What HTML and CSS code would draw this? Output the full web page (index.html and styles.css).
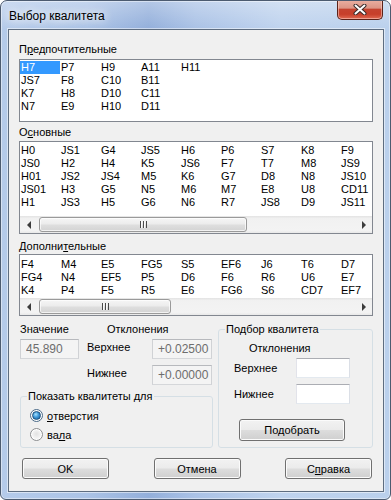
FILE: index.html
```html
<!DOCTYPE html>
<html lang="ru">
<head>
    <meta charset="UTF-8">
    <title>Выбор квалитета</title>
    <link rel="stylesheet" href="styles.css">
</head>
<body>
    <div class="window">
        <div class="titlebar">
            <span class="title">Выбор квалитета</span>
            <button class="close-btn" title="Закрыть">
                <svg width="14" height="11" viewBox="0 0 14 11">
                    <path d="M2.5 1.5 L11.5 9.5 M11.5 1.5 L2.5 9.5" stroke="#3a2a28" stroke-width="4" stroke-linecap="round" fill="none"/>
                    <path d="M2.5 1.5 L11.5 9.5 M11.5 1.5 L2.5 9.5" stroke="#ffffff" stroke-width="2" stroke-linecap="round" fill="none"/>
                </svg>
            </button>
        </div>

        <div class="client">
            <!-- Предпочтительные -->
            <div class="section-label label-pref">П<u>р</u>едпочтительные</div>
            <div class="listbox listbox-pref">
                <div class="items rows-4">
                    <span class="item selected">H7</span><span class="item">JS7</span><span class="item">K7</span><span class="item">N7</span>
                    <span class="item">P7</span><span class="item">F8</span><span class="item">H8</span><span class="item">E9</span>
                    <span class="item">H9</span><span class="item">C10</span><span class="item">D10</span><span class="item">H10</span>
                    <span class="item">A11</span><span class="item">B11</span><span class="item">C11</span><span class="item">D11</span>
                    <span class="item">H11</span>
                </div>
            </div>

            <!-- Основные -->
            <div class="section-label label-main">О<u>с</u>новные</div>
            <div class="listbox listbox-main">
                <div class="items rows-5">
                    <span class="item">H0</span><span class="item">JS0</span><span class="item">H01</span><span class="item">JS01</span><span class="item">H1</span>
                    <span class="item">JS1</span><span class="item">H2</span><span class="item">JS2</span><span class="item">H3</span><span class="item">JS3</span>
                    <span class="item">G4</span><span class="item">H4</span><span class="item">JS4</span><span class="item">G5</span><span class="item">H5</span>
                    <span class="item">JS5</span><span class="item">K5</span><span class="item">M5</span><span class="item">N5</span><span class="item">G6</span>
                    <span class="item">H6</span><span class="item">JS6</span><span class="item">K6</span><span class="item">M6</span><span class="item">N6</span>
                    <span class="item">P6</span><span class="item">F7</span><span class="item">G7</span><span class="item">M7</span><span class="item">R7</span>
                    <span class="item">S7</span><span class="item">T7</span><span class="item">D8</span><span class="item">E8</span><span class="item">JS8</span>
                    <span class="item">K8</span><span class="item">M8</span><span class="item">N8</span><span class="item">U8</span><span class="item">D9</span>
                    <span class="item">F9</span><span class="item">JS9</span><span class="item">JS10</span><span class="item">CD11</span><span class="item">JS11</span>
                </div>
                <div class="hscroll">
                    <span class="scroll-arrow arrow-left"></span>
                    <div class="scroll-track">
                        <div class="scroll-thumb thumb-main"><span class="grip"></span></div>
                    </div>
                    <span class="scroll-arrow arrow-right"></span>
                </div>
            </div>

            <!-- Дополнительные -->
            <div class="section-label label-extra">Дополни<u>т</u>ельные</div>
            <div class="listbox listbox-extra">
                <div class="items rows-3">
                    <span class="item">F4</span><span class="item">FG4</span><span class="item">K4</span>
                    <span class="item">M4</span><span class="item">N4</span><span class="item">P4</span>
                    <span class="item">E5</span><span class="item">EF5</span><span class="item">F5</span>
                    <span class="item">FG5</span><span class="item">P5</span><span class="item">R5</span>
                    <span class="item">S5</span><span class="item">D6</span><span class="item">E6</span>
                    <span class="item">EF6</span><span class="item">F6</span><span class="item">FG6</span>
                    <span class="item">J6</span><span class="item">R6</span><span class="item">S6</span>
                    <span class="item">T6</span><span class="item">U6</span><span class="item">CD7</span>
                    <span class="item">D7</span><span class="item">E7</span><span class="item">EF7</span>
                </div>
                <div class="hscroll">
                    <span class="scroll-arrow arrow-left"></span>
                    <div class="scroll-track">
                        <div class="scroll-thumb thumb-extra"><span class="grip"></span></div>
                    </div>
                    <span class="scroll-arrow arrow-right"></span>
                </div>
            </div>

            <div class="lower">
                <div class="lower-left">
                    <div class="head-row">
                        <span class="lbl-value">Значение</span>
                        <span>Отклонения</span>
                    </div>
                    <div class="field-row">
                        <input class="textbox tb-value" value="45.890" disabled>
                        <span class="field-label">Верхнее</span>
                        <input class="textbox tb-dev" value="+0.02500" disabled>
                    </div>
                    <div class="field-row">
                        <span class="field-label indent">Нижнее</span>
                        <input class="textbox tb-dev" value="+0.00000" disabled>
                    </div>
                    <fieldset class="group group-show">
                        <legend>Показать квалитеты для</legend>
                        <label class="radio"><span class="radio-mark checked"></span><u>о</u>тверстия</label>
                        <label class="radio"><span class="radio-mark"></span>ва<u>л</u>а</label>
                    </fieldset>
                </div>

                <fieldset class="group group-pick">
                    <legend>Подбор квалитета</legend>
                    <div class="pick-title">Отклонения</div>
                    <div class="pick-row first">
                        <span class="pick-label">Верхнее</span>
                        <input class="textbox tb-pick">
                    </div>
                    <div class="pick-row">
                        <span class="pick-label">Нижнее</span>
                        <input class="textbox tb-pick">
                    </div>
                    <button class="btn btn-pick">Подобрать</button>
                </fieldset>
            </div>

            <div class="dialog-buttons">
                <button class="btn btn-dialog">OK</button>
                <button class="btn btn-dialog">Отмена</button>
                <button class="btn btn-dialog">С<u>п</u>равка</button>
            </div>
        </div>
    </div>
</body>
</html>
```

FILE: styles.css
```css
* {
    box-sizing: border-box;
}

body {
    margin: 0;
    background: #ffffff;
    font-family: "Liberation Sans", Arial, sans-serif;
    font-size: 11px;
    color: #000;
}

u {
    text-decoration: underline;
    text-underline-offset: 1px;
}

/* Window frame */
.window {
    width: 391px;
    height: 500px;
    border: 1px solid #4c5b70;
    border-radius: 7px 7px 6px 6px;
    overflow: hidden;
    background:
        linear-gradient(180deg, rgba(255, 255, 255, 0.3), rgba(255, 255, 255, 0) 28px),
        linear-gradient(90deg, #b5cbea 0%, #abc3e6 22%, #93afdb 38%, #aac2e6 50%, #bfd3ee 72%, #bad0ec 100%);
    box-shadow: inset 0 0 0 1px rgba(255, 255, 255, 0.45);
}

.titlebar {
    height: 28px;
    display: flex;
    justify-content: space-between;
    align-items: flex-start;
}

.title {
    padding: 8px 0 0 8px;
    font-size: 12px;
    line-height: 15px;
    color: #000;
    text-shadow: 0 0 8px #fff, 0 0 12px #fff;
}

.close-btn {
    width: 46px;
    height: 20px;
    margin: -1px 7px 0 0;
    padding: 0;
    border: 1px solid #5b2219;
    border-top: none;
    border-radius: 0 0 5px 5px;
    background: linear-gradient(180deg, #eab0a2 0%, #dc9585 42%, #c5432f 50%, #c73f2a 75%, #e06a52 100%);
    box-shadow: inset 0 0 0 1px rgba(255, 210, 200, 0.55);
    display: flex;
    align-items: center;
    justify-content: center;
}

/* Client area */
.client {
    width: 376px;
    margin-left: 7px;
    border: 1px solid #5e6d80;
    box-shadow: 0 0 0 1px rgba(255, 255, 255, 0.5);
    background: #f0f0f0;
    padding: 0 10px 12px;
}

.section-label {
    line-height: 13px;
}
.label-pref {
    margin-top: 13px;
}
.label-main {
    margin-top: 4px;
}
.label-extra {
    margin-top: 6px;
}

/* List boxes */
.listbox {
    background: #fff;
    border: 1px solid #828790;
    overflow: hidden;
    display: flex;
    flex-direction: column;
}
.listbox-pref {
    height: 63px;
    margin-top: 3px;
    padding-top: 1px;
}
.listbox-main {
    height: 93px;
    margin-top: 2px;
    padding-top: 2px;
}
.listbox-extra {
    height: 62px;
    margin-top: 1px;
    padding-top: 3px;
}

.items {
    flex: 1;
    display: grid;
    grid-auto-flow: column;
    grid-auto-columns: 40px;
    align-content: start;
}
.rows-3 {
    grid-template-rows: repeat(3, 13px);
}
.rows-4 {
    grid-template-rows: repeat(4, 13px);
}
.rows-5 {
    grid-template-rows: repeat(5, 13px);
}

.item {
    padding-left: 1px;
    line-height: 13px;
    white-space: nowrap;
}
.item.selected {
    background: #3399ff;
    color: #fff;
}

/* Horizontal scrollbar */
.hscroll {
    height: 17px;
    display: flex;
    background: linear-gradient(180deg, #e3e3e3 0%, #f1f1f1 15%, #f3f3f3 85%, #e8e8e8 100%);
}
.scroll-arrow {
    width: 17px;
    display: flex;
    align-items: center;
    justify-content: center;
}
.scroll-arrow::before {
    content: "";
    border-top: 4px solid transparent;
    border-bottom: 4px solid transparent;
}
.arrow-left::before {
    border-right: 4px solid #3c3c3c;
}
.arrow-right::before {
    border-left: 4px solid #3c3c3c;
}
.scroll-track {
    flex: 1;
    padding: 1px 0 1px 2px;
}
.scroll-thumb {
    height: 100%;
    border: 1px solid #9a9a9a;
    border-radius: 3px;
    background: linear-gradient(180deg, #f6f6f6 0%, #ececec 45%, #dedede 55%, #d3d3d3 100%);
    box-shadow: inset 0 0 0 1px rgba(255, 255, 255, 0.7);
    display: flex;
    align-items: center;
    justify-content: center;
}
.thumb-main {
    width: 208px;
}
.thumb-extra {
    width: 132px;
}
.grip {
    width: 7px;
    height: 7px;
    background: repeating-linear-gradient(90deg, #4a4a4a 0 1px, #fafafa 1px 2px, transparent 2px 3px);
}

/* Lower part */
.lower {
    display: flex;
    gap: 5px;
    margin-top: 7px;
    padding-left: 1px;
}
.lower-left {
    width: 193px;
}
.head-row {
    display: flex;
    line-height: 13px;
}
.lbl-value {
    width: 87px;
}

.field-row {
    display: flex;
    align-items: flex-start;
    margin-top: 3px;
}
.field-row + .field-row {
    margin-top: 6px;
}
.field-label {
    width: 65px;
    margin-left: 8px;
    padding-top: 2px;
    line-height: 13px;
}
.field-label.indent {
    margin-left: 67px;
}

.textbox {
    height: 20px;
    margin: 0;
    padding: 0 1px 0 5px;
    font-family: "Liberation Sans", Arial, sans-serif;
    font-size: 12px;
    color: #000;
    background: #fff;
    border: 1px solid #abadb3;
    border-color: #abadb3 #dbdfe6 #e3e9ef #e2e3ea;
    border-radius: 0;
    outline: none;
}
.textbox:disabled {
    color: #6d6d6d;
    background: #f4f4f4;
    border-color: #b7b9bd #d0d2d5 #d5d7da #d0d2d5;
}
.tb-value {
    width: 59px;
}
.tb-dev {
    width: 60px;
}
.tb-pick {
    width: 54px;
}

/* Group boxes */
.group {
    margin: 0;
    min-width: 0;
    border: 1px solid #d5dfe5;
    border-radius: 3px;
}
.group legend {
    padding: 0 1px;
    line-height: 13px;
}
.group-show {
    margin-top: 5px;
    padding: 3px 0 3px 6px;
}
.group-pick {
    width: 155px;
    height: 125px;
    padding: 0 0 6px 6px;
}

.radio {
    display: flex;
    align-items: center;
    height: 19px;
    margin-left: 3px;
}
.radio-mark {
    width: 13px;
    height: 13px;
    margin-right: 4px;
    border: 1px solid #8c8e90;
    border-radius: 50%;
    background: radial-gradient(circle at 50% 45%, #e2e2e2 0%, #f1f1f1 45%, #fbfbfb 100%);
    box-shadow: inset 0 0 0 1px #fff;
    display: flex;
    align-items: center;
    justify-content: center;
}
.radio-mark.checked {
    border-color: #4a6a88;
}
.radio-mark.checked::after {
    content: "";
    width: 7px;
    height: 7px;
    border-radius: 50%;
    border: 1px solid #1d527f;
    background: radial-gradient(circle at 40% 35%, #a6e2ff 0%, #3e98d8 45%, #135d9c 100%);
}

.pick-title {
    margin: 6px 0 0 24px;
    line-height: 13px;
}
.pick-row {
    display: flex;
    align-items: center;
    margin-top: 6px;
}
.pick-row.first {
    margin-top: 3px;
}
.pick-label {
    width: 62px;
    margin-left: 9px;
    line-height: 13px;
}

/* Buttons */
.btn {
    margin: 0;
    padding: 0;
    font-family: "Liberation Sans", Arial, sans-serif;
    font-size: 11px;
    color: #000;
    border: 1px solid #707070;
    border-radius: 3px;
    background: linear-gradient(180deg, #f2f2f2 0%, #ebebeb 48%, #dddddd 52%, #cfcfcf 100%);
    box-shadow: inset 0 0 0 1px #fbfbfb;
}
.btn-pick {
    display: block;
    width: 106px;
    height: 22px;
    margin: 15px 0 0 14px;
}

.dialog-buttons {
    display: flex;
    justify-content: space-between;
    margin-top: 10px;
    padding: 0 1px 0 3px;
}
.btn-dialog {
    width: 87px;
    height: 21px;
}
```
